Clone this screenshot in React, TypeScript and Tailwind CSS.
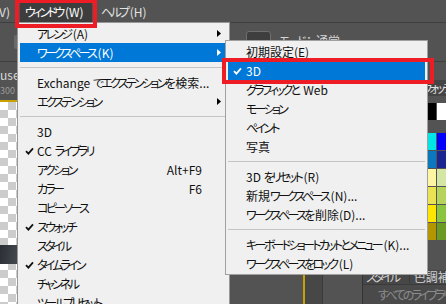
import React from "react";

type Item =
  | { sep: true }
  | {
      sep?: false;
      label: string;
      shortcut?: string;
      checked?: boolean;
      arrow?: boolean;
      active?: boolean;
    };

const windowMenu: Item[] = [
  { label: "アレンジ(A)", arrow: true },
  { label: "ワークスペース(K)", arrow: true, active: true },
  { sep: true },
  { label: "Exchange でエクステンションを検索..." },
  { label: "エクステンション", arrow: true },
  { sep: true },
  { label: "3D" },
  { label: "CC ライブラリ", checked: true },
  { label: "アクション", shortcut: "Alt+F9" },
  { label: "カラー", shortcut: "F6" },
  { label: "コピーソース" },
  { label: "スウォッチ", checked: true },
  { label: "スタイル" },
  { label: "タイムライン", checked: true },
  { label: "チャンネル" },
  { label: "ツールプリセット" },
];

const workspaceMenu: Item[] = [
  { label: "初期設定(E)" },
  { label: "3D", checked: true, active: true },
  { label: "グラフィックと Web" },
  { label: "モーション" },
  { label: "ペイント" },
  { label: "写真" },
  { sep: true },
  { label: "3D をリセット(R)" },
  { label: "新規ワークスペース(N)..." },
  { label: "ワークスペースを削除(D)..." },
  { sep: true },
  { label: "キーボードショートカットとメニュー(K)..." },
  { label: "ワークスペースをロック(L)" },
];

// swatch rows, only the two right-most cells show from under the submenu
const swatchRows = [
  ["#00e6e6", "#0000ff"],
  ["#0b78bd", "#1b2592"],
  ["#fff5a3", "#d4e6a3"],
  ["#ebe254", "#b6d45b"],
  ["#ffe600", "#8bc53f"],
  ["#b39600", "#6b9a22"],
];

// kana in the UI font are much narrower than Noto's, so squeeze only them
const Jp = ({ text }: { text: string }) => (
  <>
    {text.split(/([\u3040-\u30ff]+)/).map((part, i) =>
      /[\u3040-\u30ff]/.test(part) ? (
        <span key={i} className="tracking-[-2.7px] mr-[2.4px]">
          {part}
        </span>
      ) : (
        <span key={i}>{part}</span>
      )
    )}
  </>
);

const Check = ({ white }: { white?: boolean }) => (
  <svg width="9" height="8" viewBox="0 0 9 8">
    <path
      d="M1 4.2 3.4 6.6 8 1.4"
      fill="none"
      stroke={white ? "#ffffff" : "#111111"}
      strokeWidth="1.8"
    />
  </svg>
);

const Arrow = ({ white }: { white?: boolean }) => (
  <svg width="4" height="7" viewBox="0 0 4 7">
    <path d="M0 0 4 3.5 0 7Z" fill={white ? "#ffffff" : "#000000"} />
  </svg>
);

const MenuRow = ({ item, pad }: { item: Item; pad: string }) => {
  if (item.sep) {
    return (
      <div className="h-[11px] mx-[2px] flex items-center">
        <div className="h-px w-full bg-[#c4c4c4]" />
      </div>
    );
  }
  return (
    <div
      className={`relative flex items-center h-[19px] mx-[2px] ${pad} pr-[25px] leading-none whitespace-nowrap ${
        item.active ? "bg-[#0078d7] text-white" : "text-[#111111]"
      }`}
    >
      {item.checked && (
        <span className="absolute left-[5px] top-[6px] flex">
          <Check white={item.active} />
        </span>
      )}
      <span className="flex-1">
        <Jp text={item.label} />
      </span>
      {item.shortcut && <span>{item.shortcut}</span>}
      {item.arrow && (
        <span className="absolute right-[6px] top-[6px] flex">
          <Arrow white={item.active} />
        </span>
      )}
    </div>
  );
};

export default function App() {
  return (
    <div className="relative w-[446px] h-[304px] overflow-hidden bg-[#535353] text-[12px] [font-family:'Noto_Sans_CJK_JP',sans-serif] [font-feature-settings:'palt']">
      {/* menu bar */}
      <div className="flex items-center h-[22px] bg-[#535353] text-[#e2e2e2] leading-none">
        <span className="ml-[-5px] pt-[2px]">(V)</span>
        <span className="ml-[10px] w-[72px] h-[22px] px-[5px] flex items-center pt-[2px] bg-[#3d3d3d] text-white whitespace-nowrap">
          <Jp text="ウィンドウ(W)" />
        </span>
        <span className="ml-[4px] px-[5px] pt-[2px] whitespace-nowrap">
          <Jp text="ヘルプ(H)" />
        </span>
      </div>

      {/* options bar */}
      <div className="flex items-center h-[40px] border-t border-b border-[#3f3f3f] bg-[#535353]">
        <div className="ml-[14px] w-[20px] h-[14px] rounded-[2px] bg-[#6a6a6a]" />
        <div className="ml-[212px] w-[25px] h-[22px] rounded-[3px] border border-[#6e6e6e] bg-[#3e3e3e]" />
        <span className="ml-[8px] mt-[-2px] text-[#d6d6d6] leading-none whitespace-nowrap">
          <Jp text="モード：" />
        </span>
        <span className="ml-[4px] mt-[-2px] text-[#d6d6d6] leading-none">通常</span>
      </div>

      {/* work area */}
      <div className="flex h-[242px]">
        <div className="flex-1 flex flex-col min-w-0">
          <div className="h-[24px] flex items-center text-[#d8d8d8] leading-none pt-[2px]">
            <span>use</span>
          </div>
          <div className="h-[14px] flex items-start text-[9px] text-[#9a9a9a] leading-none">
            <span>300</span>
          </div>
          <div className="h-[2px] bg-[#c9a200]" />
          <div className="flex-1 flex min-h-0">
            <div className="w-[80px] flex flex-col bg-[conic-gradient(#cccccc_25%,#ffffff_0_50%,#cccccc_0_75%,#ffffff_0)] bg-size-[16px_16px]">
              <div className="mt-[143px] h-[19px] w-[48px] rounded-r-[10px] bg-[linear-gradient(100deg,#2b2e33,#4a5058_50%,#2a2d31)]" />
            </div>
            <div className="flex-1 flex flex-col">
              <div className="flex-1 bg-[#282828]" />
              <div className="h-[40px] flex border-t border-[#3a3a3a]">
                <div className="flex-1 bg-[#535353]" />
                <div className="w-[2px] bg-[#c9a200]" />
                <div className="w-[17px] bg-[#474747]" />
                <div className="w-px bg-[#3a3a3a]" />
                <div className="w-[39px] bg-[#535353]" />
                <div className="w-px bg-[#333333]" />
              </div>
            </div>
          </div>
        </div>

        {/* right panels */}
        <div className="w-[83px] flex flex-col bg-[#535353]">
          <div className="h-[18px]" />
          <div className="h-[16px] flex items-center pl-[50px] bg-[#454545] text-[#e0e0e0] leading-none whitespace-nowrap">
            <Jp text="スウォッチ" />
          </div>
          <div className="h-[7px]" />
          <div className="h-[17px] flex justify-end gap-[1px]">
            <div className="w-[9px] bg-[#000000]" />
            <div className="w-[9px] bg-[#ffffff]" />
          </div>
          <div className="h-[13px]" />
          <div className="flex flex-col gap-[1px]">
            {swatchRows.map((row, i) => (
              <div key={i} className="h-[17px] flex justify-end gap-[1px]">
                {row.map((c) => (
                  <div key={c} className="w-[9px]" style={{ backgroundColor: c }} />
                ))}
              </div>
            ))}
          </div>
          <div className="flex-1" />
          <div className="h-[14px] flex items-center bg-[#474747] text-[#cfcfcf] leading-none whitespace-nowrap">
            <span className="pl-[3px] pr-[8px] border-r border-[#3a3a3a]">
              <Jp text="スタイル" />
            </span>
            <span className="pl-[4px]">色調補正</span>
          </div>
          <div className="h-[20px] flex items-center pl-[10px] gap-[5px] bg-[#4a4a4a] text-[#8c8c8c] leading-none whitespace-nowrap border-t border-[#3a3a3a]">
            <svg width="9" height="9" viewBox="0 0 9 9">
              <circle cx="3.5" cy="3.5" r="2.6" fill="none" stroke="#ffffff" strokeWidth="1.5" />
              <path d="M5.5 5.5 8.5 8.5" stroke="#ffffff" strokeWidth="1.8" />
            </svg>
            <span>
              <Jp text="すべてのライブラリ" />
            </span>
          </div>
        </div>
      </div>

      {/* ウィンドウ menu */}
      <div className="absolute left-[17px] top-[22px] w-[213px] py-[1px] bg-[#f0f0f0] border border-[#979797]">
        {windowMenu.map((item, i) => (
          <MenuRow key={i} item={item} pad="pl-[17px]" />
        ))}
      </div>

      {/* ワークスペース submenu */}
      <div className="absolute left-[225px] top-[40px] w-[203px] py-[1px] bg-[#f0f0f0] border border-[#a0a0a0]">
        {workspaceMenu.map((item, i) => (
          <MenuRow key={i} item={item} pad="pl-[18px]" />
        ))}
      </div>

      {/* red annotation boxes */}
      <div className="absolute left-[15px] top-[-1px] w-[82px] h-[29px] border-[4px] border-[#ee1c25]" />
      <div className="absolute left-[222px] top-[58px] w-[212px] h-[26px] border-[4px] border-[#ee1c25]" />
    </div>
  );
}
